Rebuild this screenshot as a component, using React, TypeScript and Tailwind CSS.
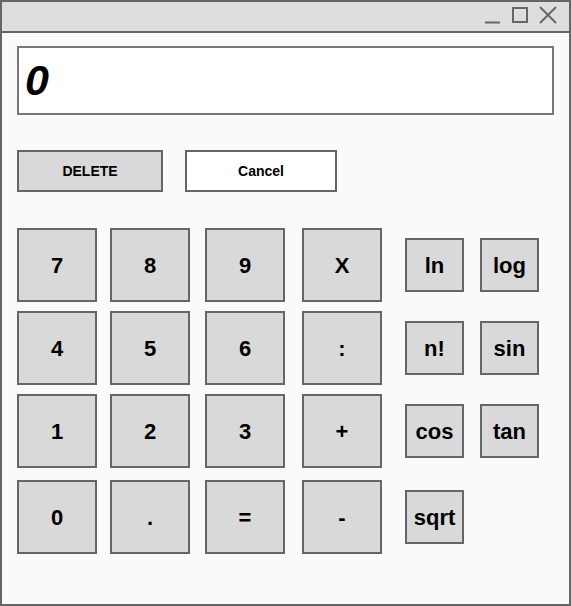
import React from "react";

const F = { fontFamily: '"Liberation Sans", Arial, sans-serif' };

function Big({ label, ml }: { label: string; ml: string }) {
  return (
    <div
      className={`w-[80px] h-[74px] shrink-0 bg-[#d9d9d9] border-2 border-[#666] flex items-center justify-center text-[22px] font-bold text-black ${ml}`}
    >
      {label}
    </div>
  );
}

function Small({ label, ml }: { label: string; ml: string }) {
  return (
    <div
      className={`w-[59px] h-[54px] shrink-0 bg-[#d9d9d9] border-2 border-[#666] flex items-center justify-center text-[22px] font-bold text-black ${ml}`}
    >
      {label}
    </div>
  );
}

function Row({ keys, small, mt }: { keys: string[]; small: string[]; mt: string }) {
  return (
    <div className={`flex items-center ${mt}`}>
      <Big label={keys[0]} ml="ml-0" />
      <Big label={keys[1]} ml="ml-[13px]" />
      <Big label={keys[2]} ml="ml-[15px]" />
      <Big label={keys[3]} ml="ml-[17px]" />
      {small[0] && <Small label={small[0]} ml="ml-[23px]" />}
      {small[1] && <Small label={small[1]} ml="ml-[16px]" />}
    </div>
  );
}

export default function App() {
  return (
    <div style={F} className="w-[571px] h-[606px] border-2 border-[#666] bg-[#fafafa] flex flex-col overflow-hidden">
      <div className="h-[31px] shrink-0 bg-[#dedede] border-b-2 border-[#666] relative">
        <svg className="absolute left-0 top-0" width="567" height="29" viewBox="2 2 567 29">
          <g stroke="#666" strokeWidth="2" fill="none">
            <line x1="485" y1="22.5" x2="500" y2="22.5" />
            <rect x="513" y="8" width="14" height="14" />
            <line x1="540" y1="7" x2="556" y2="23" />
            <line x1="556" y1="7" x2="540" y2="23" />
          </g>
        </svg>
      </div>
      <div className="pl-[15px] pt-[13px] flex flex-col">
        <div className="w-[537px] h-[69px] bg-white border-2 border-[#777] flex items-center pl-[6px]">
          <span className="text-[43px] font-bold italic text-black leading-none">0</span>
        </div>
        <div className="flex mt-[35px]">
          <div className="w-[146px] h-[42px] bg-[#d9d9d9] border-2 border-[#666] flex items-center justify-center text-[14px] font-bold text-black">
            DELETE
          </div>
          <div className="w-[152px] h-[42px] ml-[22px] bg-white border-2 border-[#666] flex items-center justify-center text-[14px] font-bold text-black">
            Cancel
          </div>
        </div>
        <Row keys={["7", "8", "9", "X"]} small={["ln", "log"]} mt="mt-[36px]" />
        <Row keys={["4", "5", "6", ":"]} small={["n!", "sin"]} mt="mt-[9px]" />
        <Row keys={["1", "2", "3", "+"]} small={["cos", "tan"]} mt="mt-[9px]" />
        <Row keys={["0", ".", "=", "-"]} small={["sqrt"]} mt="mt-[12px]" />
      </div>
    </div>
  );
}
